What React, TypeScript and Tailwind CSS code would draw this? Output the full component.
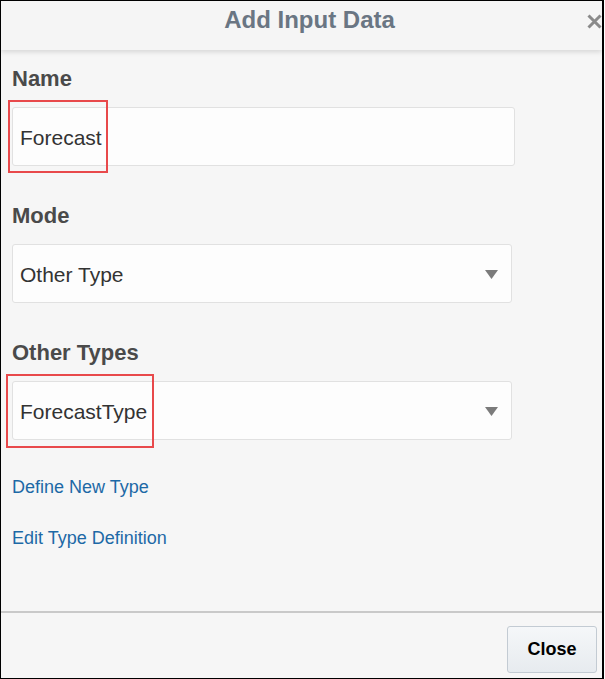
const Caret = () => (
  <svg width="13" height="9" viewBox="0 0 13 9" className="shrink-0">
    <polygon points="0,0 13,0 6.5,9" fill="#7b7b7b" />
  </svg>
);

const Label = ({ children, className = "" }: { children: string; className?: string }) => (
  <div className={`text-[22px] leading-none font-bold text-[#4a4a4a] ${className}`}>{children}</div>
);

// red annotation frame drawn over a field
const Highlight = ({ className }: { className: string }) => (
  <div className={`absolute border-2 border-[#e8494b] pointer-events-none ${className}`} />
);

export default function App() {
  return (
    <div className="w-[604px] h-[679px] border border-r-2 border-black bg-[#f6f6f6] flex flex-col overflow-hidden relative font-['Liberation_Sans',Arial,sans-serif]">
      {/* Header */}
      <div className="relative z-10 h-[49px] shrink-0 bg-[#f5f5f5] shadow-[0_2px_5px_rgba(0,0,0,0.13)] flex justify-center pl-4 pt-[7px]">
        <h1 className="text-[24px] leading-none font-bold text-[#6a7683]">Add Input Data</h1>
        <button className="absolute right-[0px] top-[13px] w-[15px] h-[15px]" aria-label="Close">
          <svg width="15" height="15" viewBox="0 0 15 15">
            <path d="M1.5 1.5 L13.5 13.5 M13.5 1.5 L1.5 13.5" stroke="#8a8a8a" strokeWidth="3" />
          </svg>
        </button>
      </div>

      {/* Body */}
      <div className="flex-1 flex flex-col items-start px-[11px]">
        <Label className="mt-[18px]">Name</Label>
        <div className="relative mt-[17px]">
          <div className="w-[503px] h-[59px] border border-[#e1e1e1] rounded-[3px] bg-[#fdfdfd] px-[7px] pt-[3px] flex items-center text-[21px] text-[#333333]">
            Forecast
          </div>
          <Highlight className="left-[-4px] top-[-7px] w-[100px] h-[73px]" />
        </div>

        <Label className="mt-[39px]">Mode</Label>
        <div className="mt-[17px] w-[500px] h-[59px] border border-[#e1e1e1] rounded-[3px] bg-[#fdfdfd] pl-[7px] pr-[13px] pt-[2px] flex items-center justify-between text-[21px] text-[#333333]">
          <span>Other Type</span>
          <Caret />
        </div>

        <Label className="mt-[39px]">Other Types</Label>
        <div className="relative mt-[17px]">
          <div className="w-[500px] h-[59px] border border-[#e1e1e1] rounded-[3px] bg-[#fdfdfd] pl-[7px] pr-[13px] pt-[2px] flex items-center justify-between text-[21px] text-[#333333]">
            <span>ForecastType</span>
            <Caret />
          </div>
          <Highlight className="left-[-6px] top-[-7px] w-[148px] h-[74px]" />
        </div>

        <a className="mt-[38px] text-[18px] leading-none text-[#1d69a6] cursor-pointer">Define New Type</a>
        <a className="mt-[33px] text-[18px] leading-none text-[#1d69a6] cursor-pointer">Edit Type Definition</a>
      </div>

      {/* Footer */}
      <div className="h-[67px] shrink-0 border-t-2 border-[#c9c9c9] flex justify-end items-start pt-[13px] pr-[5px]">
        <button className="w-[90px] h-[47px] border border-[#c3cbd3] rounded-[3px] bg-gradient-to-b from-[#f5f7f9] to-[#e7ebef] text-[18px] font-bold text-black">
          Close
        </button>
      </div>
    </div>
  );
}
